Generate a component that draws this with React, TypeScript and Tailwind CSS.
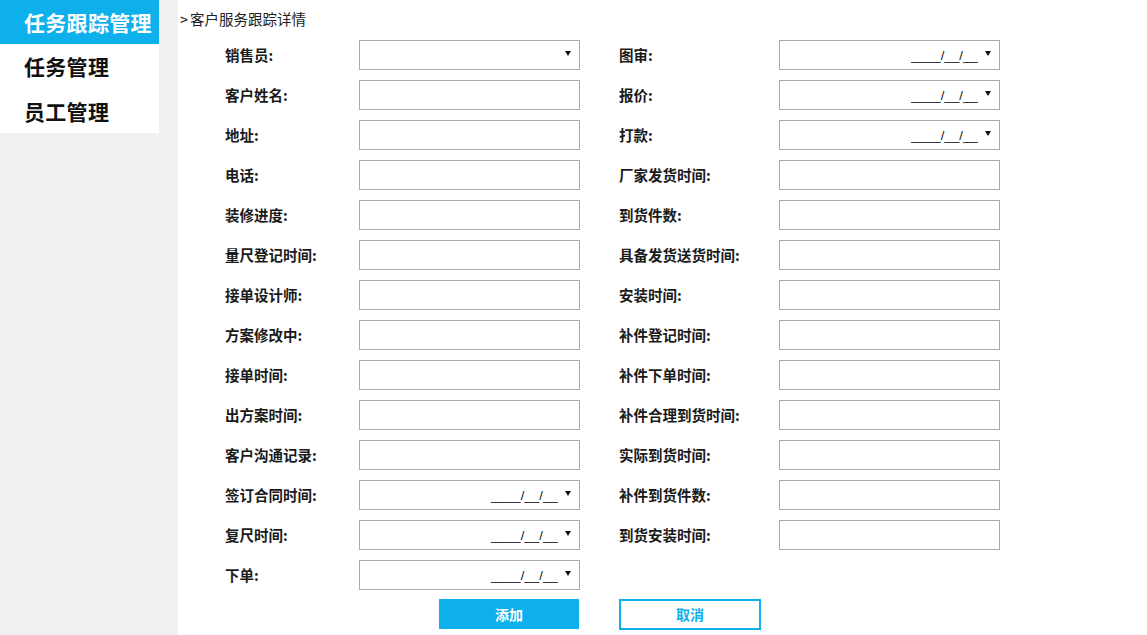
import React from "react";

type Kind = "text" | "select" | "date";

const leftFields: [string, Kind][] = [
  ["销售员:", "select"],
  ["客户姓名:", "text"],
  ["地址:", "text"],
  ["电话:", "text"],
  ["装修进度:", "text"],
  ["量尺登记时间:", "text"],
  ["接单设计师:", "text"],
  ["方案修改中:", "text"],
  ["接单时间:", "text"],
  ["出方案时间:", "text"],
  ["客户沟通记录:", "text"],
  ["签订合同时间:", "date"],
  ["复尺时间:", "date"],
  ["下单:", "date"],
];

const rightFields: [string, Kind][] = [
  ["图审:", "date"],
  ["报价:", "date"],
  ["打款:", "date"],
  ["厂家发货时间:", "text"],
  ["到货件数:", "text"],
  ["具备发货送货时间:", "text"],
  ["安装时间:", "text"],
  ["补件登记时间:", "text"],
  ["补件下单时间:", "text"],
  ["补件合理到货时间:", "text"],
  ["实际到货时间:", "text"],
  ["补件到货件数:", "text"],
  ["到货安装时间:", "text"],
];

function Arrow() {
  return (
    <svg width="6" height="5" viewBox="0 0 6 5" className="absolute right-[8px] top-[10px]">
      <polygon points="0,0 6,0 3,5" fill="#111" />
    </svg>
  );
}

function Field({ kind }: { kind: Kind }) {
  return (
    <div className="relative w-[221px] h-[30px] border border-[#a9a9a9] bg-white">
      {kind === "date" && (
        <span className="absolute right-[21px] top-[7px] text-[13px] leading-[16px] text-[#111] [font-family:'Liberation_Sans',Arial,sans-serif] tracking-[0.2px]">
          ____/__/__
        </span>
      )}
      {kind !== "text" && <Arrow />}
    </div>
  );
}

function Label({ text }: { text: string }) {
  return (
    <div className="text-[14.5px] font-bold text-[#1a1a1a] leading-[20px] whitespace-nowrap">{text}</div>
  );
}

export default function App() {
  const rows = leftFields.map((l, i) => ({ l, r: rightFields[i] }));
  return (
    <div className="flex w-[1147px] h-[635px] bg-white overflow-hidden [font-family:'Noto_Sans_CJK_SC','Microsoft_YaHei',sans-serif]">
      <aside className="w-[178px] shrink-0 bg-[#f2f1ef]">
        <nav className="w-[159px] bg-white">
          <div className="h-[44px] bg-[#0db0ea] text-white text-[21px] font-bold leading-[44px] pl-[24px] tracking-[0.3px]">任务跟踪管理</div>
          <div className="h-[45px] text-[#111] text-[21px] font-bold leading-[45px] pl-[24px] tracking-[0.3px]">任务管理</div>
          <div className="h-[44px] text-[#111] text-[21px] font-bold leading-[44px] pl-[24px] tracking-[0.3px]">员工管理</div>
        </nav>
      </aside>
      <main className="flex-1">
        <div className="h-[35px] pt-[9px] pl-[2px] text-[14.5px] leading-[20px] text-[#222]">
          <span className="mr-[2px]">&gt;</span>客户服务跟踪详情
        </div>
        <div className="pl-[47px]">
          {rows.map(({ l, r }, i) => (
            <div key={i} className="flex items-center h-[40px]">
              <div className="w-[134px]">
                <Label text={l[0]} />
              </div>
              <Field kind={l[1]} />
              <div className="w-[39px]" />
              {r ? (
                <>
                  <div className="w-[160px]">
                    <Label text={r[0]} />
                  </div>
                  <Field kind={r[1]} />
                </>
              ) : null}
            </div>
          ))}
          <div className="flex mt-[4px] pl-[214px] gap-[40px]">
            <button className="w-[140px] h-[30px] bg-[#0db0ea] text-white text-[14px] font-bold">添加</button>
            <button className="w-[142px] h-[31px] border-2 border-[#0db0ea] bg-white text-[#0db0ea] text-[14px] font-bold">取消</button>
          </div>
        </div>
      </main>
    </div>
  );
}
